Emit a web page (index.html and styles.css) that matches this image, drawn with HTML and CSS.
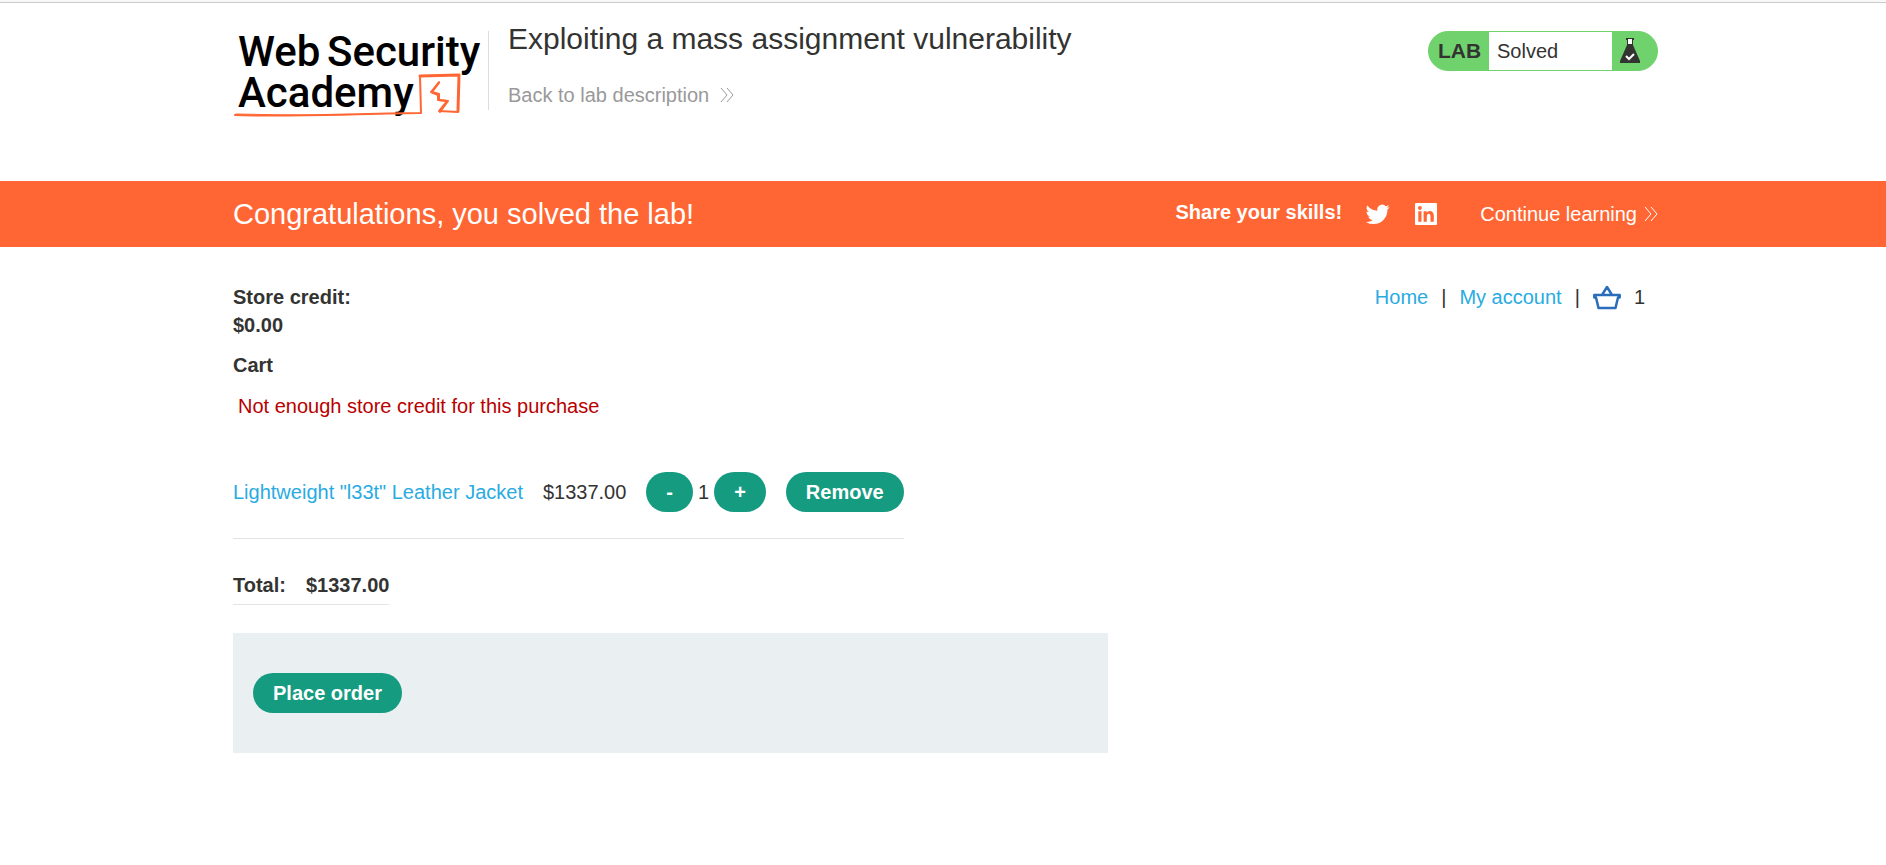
FILE: index.html
```html
<!DOCTYPE html>
<html lang="en">
<head>
<meta charset="utf-8">
<title>Exploiting a mass assignment vulnerability</title>
<link rel="stylesheet" href="styles.css">
</head>
<body>
<header class="lab-header">
  <div class="container header-row">
    <a class="logo" href="#" aria-label="Web Security Academy">
      <svg width="250" height="96" viewBox="233 26 250 96">
        <g class="logo-text">
          <text x="238" y="66">Web</text>
          <text x="327" y="66">Security</text>
          <text x="238" y="107">Academy</text>
        </g>
        <g fill="none" stroke="#ff6633" stroke-linejoin="round" stroke-linecap="round">
          <path stroke-width="2" d="M235 115 C290 117 340 114 421 113 L420 76"/>
          <path stroke-width="1" d="M236 114 C290 115 320 116 370 114"/>
          <path stroke-width="3" d="M420 76 L459 75 L458 111"/>
          <path stroke-width="2" d="M439 82 L431 92 L438 95 L438 100 L447 101 L439 111 L458 112"/>
          <path stroke-width="2" d="M439 83 L432 92 L439 94 L439 100 L448 101 L440 112"/>
        </g>
      </svg>
    </a>
    <div class="title-block">
      <h1 class="lab-title">Exploiting a mass assignment vulnerability</h1>
      <a class="back-link" href="#">Back to lab description
        <svg width="14" height="16" viewBox="0 0 14 16"><path d="M1 1 L7 8 L1 15 M7 1 L13 8 L7 15"/></svg>
      </a>
    </div>
    <div class="status">
      <span class="status-label">LAB</span>
      <span class="status-text">Solved</span>
      <svg class="status-icon" width="20" height="26" viewBox="0 0 20 26">
        <path fill="#333332" d="M6 0H14V2H13V7L20 23V25H0V23L7 7V2H6Z"/>
        <path fill="#fff" d="M8 1H12V6H8Z"/>
        <path fill="none" stroke="#fff" stroke-width="2" d="M6 18L9 21L14 16"/>
      </svg>
    </div>
  </div>
</header>
<section class="banner">
  <div class="container banner-row">
    <h2 class="banner-title">Congratulations, you solved the lab!</h2>
    <span class="share">Share your skills!</span>
    <a class="social" href="#" aria-label="Twitter">
      <svg width="24" height="24" viewBox="0 0 24 24"><path d="M23.6 4.900a9.700 9.700 0 0 1-2.800.8 4.900 4.900 0 0 0 2.100-2.700 9.800 9.800 0 0 1-3.100 1.200 4.900 4.900 0 0 0-8.400 4.500A13.900 13.900 0 0 1 1.300 3.500a4.900 4.900 0 0 0 1.500 6.600 4.900 4.900 0 0 1-2.200-.6 4.900 4.900 0 0 0 3.900 4.900 4.900 4.900 0 0 1-2.200.1 4.900 4.900 0 0 0 4.600 3.400A9.900 9.900 0 0 1 0 19.900a13.900 13.900 0 0 0 7.500 2.200c9.100 0 14.300-7.700 13.900-14.600a10 10 0 0 0 2.200-2.600z"/></svg>
    </a>
    <a class="social" href="#" aria-label="LinkedIn">
      <svg width="24" height="24" viewBox="0 0 24 24"><path fill-rule="evenodd" d="M2 1H22Q23 1 23 2V22Q23 23 22 23H2Q1 23 1 22V2Q1 1 2 1ZM4.300 9.300V19.700H7.500V9.300ZM5.900 4.100A1.900 1.900 0 1 0 5.900 7.900A1.900 1.900 0 1 0 5.900 4.100ZM9.600 9.300V19.700H12.800V14.500C12.800 11 16.500 11 16.500 14.300V19.700H19.800V13.800C19.800 8.600 14.800 7.900 12.700 10.700V9.300Z"/></svg>
    </a>
    <a class="continue" href="#">Continue learning
      <svg width="14" height="16" viewBox="0 0 14 16"><path d="M1 1 L7 8 L1 15 M7 1 L13 8 L7 15"/></svg>
    </a>
  </div>
</section>
<main class="container shop">
  <div class="top-row">
    <p class="credit">Store credit:<br>$0.00</p>
    <nav class="nav">
      <a href="#">Home</a><span>|</span><a href="#">My account</a><span>|</span>
      <a class="basket" href="#" aria-label="Basket">
        <svg width="28" height="25" viewBox="0 0 28 25"><path stroke-width="2.5" d="M1.300 10H26.700V12.500H25L22.500 23H5.500L3 12.500H1.300Z M9 10L14 2L19 10"/></svg>
      </a>
      <span class="count">1</span>
    </nav>
  </div>
  <h2 class="cart-title">Cart</h2>
  <p class="warning">Not enough store credit for this purchase</p>
  <table class="cart">
    <tr>
      <td><a href="#">Lightweight "l33t" Leather Jacket</a></td>
      <td>$1337.00</td>
      <td><div class="quantity"><button class="button">-</button><span>1</span><button class="button">+</button></div></td>
      <td><button class="button">Remove</button></td>
    </tr>
  </table>
  <table class="total">
    <tr><th scope="row">Total:</th><th>$1337.00</th></tr>
  </table>
  <form class="order">
    <button class="button" type="button">Place order</button>
  </form>
</main>
</body>
</html>
```
FILE: styles.css
```css
* { box-sizing: border-box; }
body {
  margin: 0;
  border-top: 2px solid #f7f7f7;
  font: 20px/28px "Liberation Sans", Arial, sans-serif;
  color: #333332;
  background: #fff;
}
h1, h2, p { margin: 0; font-weight: normal; }
a { color: #29abe2; text-decoration: none; }
.container { max-width: 1430px; margin: 0 auto; padding-left: 5px; }
.lab-header { border-top: 1px solid #ccc; }
.header-row { display: flex; align-items: flex-start; height: 178px; padding-top: 28px; }
.logo { margin-top: -5px; }
.logo svg { display: block; }
.logo-text { font: 500 42px Roboto, sans-serif; fill: #000; }
.title-block {
  flex: 1;
  height: 79px;
  margin-left: 5px;
  padding-left: 19px;
  border-left: 1px solid #dcdcdc;
}
.lab-title { margin-top: -10px; font-size: 30px; line-height: 36px; }
.back-link { display: flex; align-items: center; gap: 11px; margin-top: 24px; color: #999; }
.back-link svg, .continue svg { fill: none; stroke: currentColor; stroke-width: 1; }
.status {
  display: flex;
  align-items: center;
  width: 230px;
  height: 40px;
  border: 1px solid #70d26d;
  border-radius: 20px;
  background: #70d26d;
}
.status-label { width: 60px; padding-left: 9px; font-weight: bold; font-size: 21px; }
.status-text { width: 123px; padding-left: 8px; background: #fff; line-height: 38px; }
.status-icon { margin-left: 8px; }
.banner { background: #ff6633; color: #fff; }
.banner-row { display: flex; align-items: center; height: 66px; }
.banner-title { flex: 1; font-size: 29px; }
.share { font-weight: bold; margin-right: 24px; padding-bottom: 4px; }
.social { height: 24px; margin-right: 24px; fill: #fff; }
.continue { display: flex; align-items: center; gap: 7px; margin-left: 18px; color: #fff; }
.shop { padding-top: 36px; }
.top-row { display: flex; justify-content: space-between; align-items: flex-start; }
.credit { font-weight: bold; }
.nav { display: flex; align-items: center; gap: 13px; padding-right: 13px; }
.basket { height: 25px; }
.basket svg { fill: none; stroke: #2a6ebb; stroke-linejoin: round; }
.cart-title { margin-top: 12px; font-size: 20px; font-weight: bold; }
.warning { margin-top: 13px; padding-left: 5px; color: #b80000; }
.cart { margin-top: 26px; border-collapse: collapse; border-bottom: 1px solid #e4e4e4; }
.cart td { height: 92px; padding: 0 20px 0 0; }
.cart td:last-child { padding-right: 0; }
.quantity { display: flex; align-items: center; gap: 5px; }
.button {
  height: 40px;
  padding: 0 20px;
  border: 0;
  border-radius: 20px;
  background: #159b80;
  color: #fff;
  font: bold 20px/40px "Liberation Sans", Arial, sans-serif;
}
.total { margin-top: 28px; border-collapse: collapse; border-bottom: 1px solid #e4e4e4; }
.total th { height: 38px; padding: 0 0 0 20px; }
.total th:first-child { padding-left: 0; }
.order { width: 875px; max-width: 100%; margin-top: 28px; padding: 40px 20px; background: #eaeff2; }
.order .button { display: block; }
```
